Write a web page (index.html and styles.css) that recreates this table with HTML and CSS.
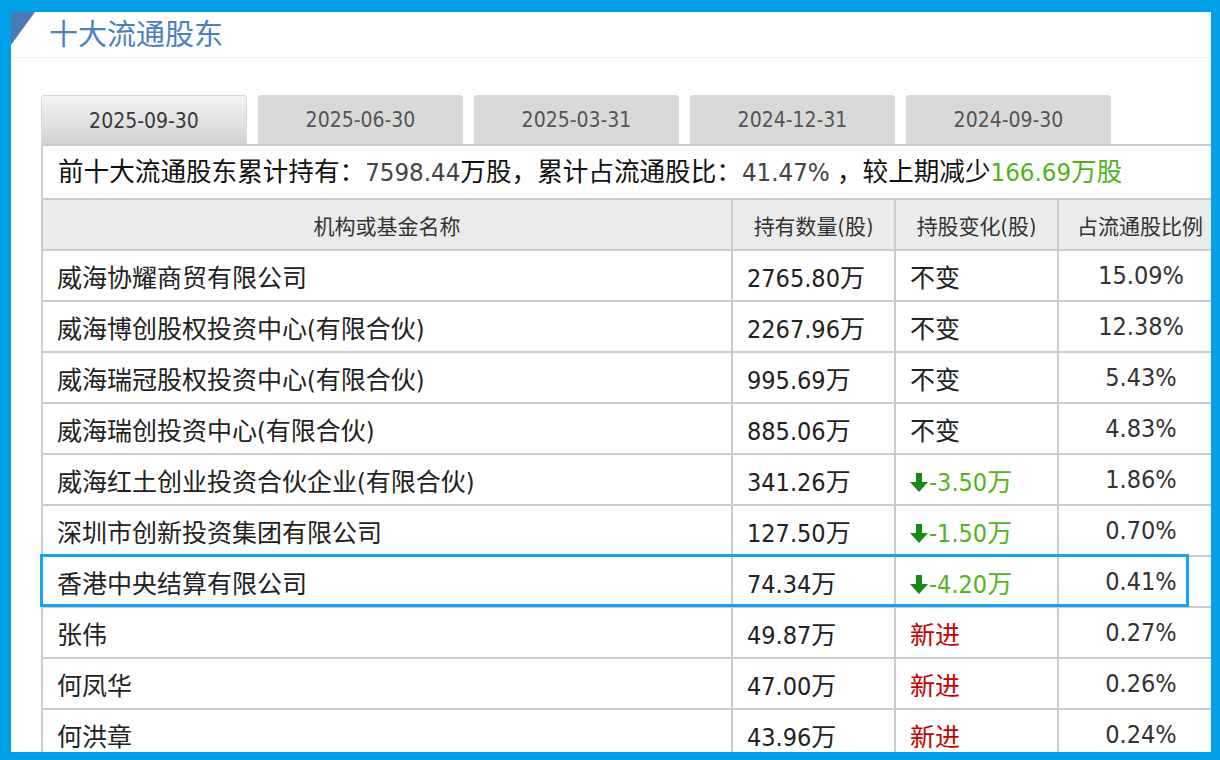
FILE: index.html
```html
<!DOCTYPE html>
<html lang="zh-CN">
<head>
<meta charset="utf-8">
<title>十大流通股东</title>
<link rel="stylesheet" href="styles.css">
</head>
<body>
<div class="frame">
  <div class="page">
    <div class="title-bar">
      <span class="corner"></span>
      <h2 class="title">十大流通股东</h2>
    </div>
    <div class="panel">
      <div class="tabs">
        <div class="tab active">2025-09-30</div>
        <div class="tab">2025-06-30</div>
        <div class="tab">2025-03-31</div>
        <div class="tab">2024-12-31</div>
        <div class="tab">2024-09-30</div>
      </div>
      <div class="table-wrap">
        <div class="summary">前十大流通股东累计持有：<span class="num">7598.44</span>万股，累计占流通股比：<span class="num">41.47%</span> ，较上期减少<span class="green">166.69万股</span></div>
        <table class="holders">
          <colgroup>
            <col class="c-name">
            <col class="c-qty">
            <col class="c-chg">
            <col class="c-pct">
          </colgroup>
          <thead>
            <tr>
              <th>机构或基金名称</th>
              <th>持有数量(股)</th>
              <th>持股变化(股)</th>
              <th>占流通股比例</th>
            </tr>
          </thead>
          <tbody>
            <tr><td>威海协耀商贸有限公司</td><td>2765.80万</td><td>不变</td><td class="pct">15.09%</td></tr>
            <tr><td>威海博创股权投资中心(有限合伙)</td><td>2267.96万</td><td>不变</td><td class="pct">12.38%</td></tr>
            <tr><td>威海瑞冠股权投资中心(有限合伙)</td><td>995.69万</td><td>不变</td><td class="pct">5.43%</td></tr>
            <tr><td>威海瑞创投资中心(有限合伙)</td><td>885.06万</td><td>不变</td><td class="pct">4.83%</td></tr>
            <tr><td>威海红土创业投资合伙企业(有限合伙)</td><td>341.26万</td><td class="down"><svg class="arrow" viewBox="0 0 18 19" width="18" height="19"><path d="M6 0h6v9h6l-9 10-9-10h6z"/></svg>-3.50万</td><td class="pct">1.86%</td></tr>
            <tr><td>深圳市创新投资集团有限公司</td><td>127.50万</td><td class="down"><svg class="arrow" viewBox="0 0 18 19" width="18" height="19"><path d="M6 0h6v9h6l-9 10-9-10h6z"/></svg>-1.50万</td><td class="pct">0.70%</td></tr>
            <tr><td>香港中央结算有限公司</td><td>74.34万</td><td class="down"><svg class="arrow" viewBox="0 0 18 19" width="18" height="19"><path d="M6 0h6v9h6l-9 10-9-10h6z"/></svg>-4.20万</td><td class="pct">0.41%</td></tr>
            <tr><td>张伟</td><td>49.87万</td><td class="new">新进</td><td class="pct">0.27%</td></tr>
            <tr><td>何凤华</td><td>47.00万</td><td class="new">新进</td><td class="pct">0.26%</td></tr>
            <tr><td>何洪章</td><td>43.96万</td><td class="new">新进</td><td class="pct">0.24%</td></tr>
          </tbody>
        </table>
        <div class="highlight"></div>
      </div>
    </div>
  </div>
</div>
</body>
</html>
```

FILE: styles.css
```css
* { box-sizing: border-box; }
html, body { margin: 0; padding: 0; background: #fff; }
body {
  font-family: "DejaVu Sans Condensed", "Noto Sans CJK SC", sans-serif;
  color: #222;
}
.frame {
  width: 1220px;
  height: 760px;
  border-style: solid;
  border-color: #01a1e7;
  border-width: 12px 9px 8px 11px;
  overflow: hidden;
  background: #fff;
}
.page { width: 1200px; }
.title-bar {
  display: flex;
  align-items: flex-start;
  height: 46px;
  border-bottom: 1px solid #f3f3f3;
}
.corner {
  width: 0;
  height: 0;
  border-top: 33px solid #4a7bb3;
  border-right: 24px solid transparent;
}
.title {
  margin: 0 0 0 14px;
  font-family: "Noto Sans CJK SC", sans-serif;
  font-size: 29px;
  font-weight: normal;
  line-height: 40px;
  color: #4a80bf;
}
.panel { padding: 37px 0 0 30px; }
.tabs {
  display: flex;
  gap: 11px;
  height: 51px;
  border-bottom: 2px solid #cccccc;
}
.tab {
  width: 205px;
  height: 49px;
  padding-top: 2px;
  background: #d9d9d9;
  border-radius: 3px 3px 0 0;
  text-align: center;
  font-size: 21px;
  line-height: 47px;
  color: #555;
}
.tab.active {
  width: 206px;
  background: linear-gradient(#f4f4f4, #d2d2d2);
  border: 1px solid #d6d6d6;
  border-bottom: none;
  line-height: 46px;
  color: #3a3a3a;
}
.table-wrap {
  position: relative;
  width: 1180px;
}
.summary {
  height: 52px;
  border-left: 2px solid #cccccc;
  padding-left: 15px;
  font-size: 25.6px;
  line-height: 52px;
  color: #111;
  white-space: nowrap;
}
.summary .num { color: #444; }
.green { color: #52b21e; }
.holders {
  width: 1180px;
  table-layout: fixed;
  border-collapse: separate;
  border-spacing: 0;
}
.c-name { width: 690px; }
.c-qty { width: 163px; }
.c-chg { width: 163px; }
.c-pct { width: 164px; }
.holders th,
.holders td {
  height: 51px;
  border-top: 2px solid #cccccc;
  border-left: 2px solid #cccccc;
  padding: 0 0 0 14px;
  white-space: nowrap;
  overflow: hidden;
  vertical-align: middle;
}
.holders th {
  background: #ebebeb;
  font-weight: normal;
  font-size: 21px;
  color: #333;
  text-align: center;
  padding: 0;
}
.holders td {
  font-size: 25px;
  color: #222;
}
.holders td.pct {
  text-align: center;
  padding: 0 0 0 2px;
  color: #333;
}
.holders td.down { color: #55b31f; }
.arrow {
  fill: #178a16;
  vertical-align: -1px;
  margin-right: 1px;
}
.holders td.new { color: #c40000; }
.highlight {
  position: absolute;
  left: -1px;
  top: 408px;
  width: 1149px;
  height: 53px;
  border: 3px solid #13a5ef;
  pointer-events: none;
}
```
